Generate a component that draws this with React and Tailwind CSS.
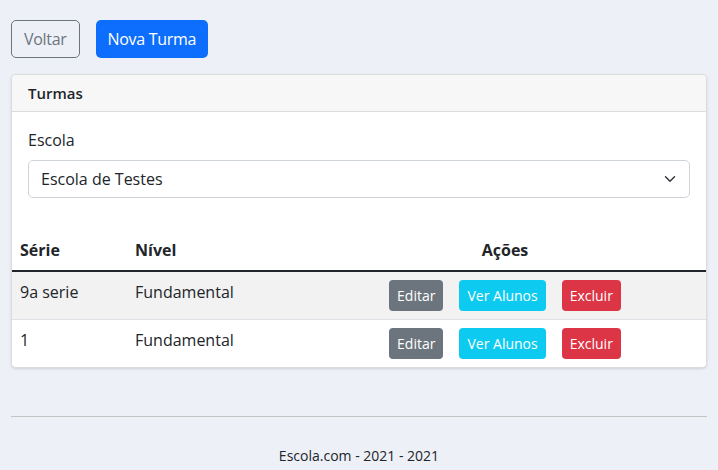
import React from 'react';

const turmas = [
  { id: 1, serie: '9a serie', nivel: 'Fundamental' },
  { id: 2, serie: '1', nivel: 'Fundamental' },
];

export default function App() {
  return (
    <div className="min-h-[470px] bg-[#edf0f7] px-[11px] pt-[20px] text-[#212529] [font-family:'Open_Sans','Noto_Sans',sans-serif]">
      {/* barra de acoes */}
      <div className="flex gap-4">
        <button className="h-[38px] px-3 border border-[#6c757d] text-[#6c757d] rounded-[5px] text-base tracking-[-0.3px]">Voltar</button>
        <button className="h-[38px] px-3 bg-[#0d6efd] text-white rounded-[5px] text-base tracking-[-0.3px]">Nova Turma</button>
      </div>

      {/* card de turmas */}
      <div className="mt-4 bg-white border border-[#dcdcdc] rounded-[5px] shadow-sm overflow-hidden">
        <div className="h-[37px] px-4 flex items-center bg-[#f7f7f7] border-b border-[#dcdcdc] text-[15px] font-semibold">Turmas</div>
        <div className="px-4 pt-4 pb-8">
          <label className="block mb-2 text-base leading-6">Escola</label>
          <div className="relative">
            <select className="w-full h-[38px] pl-3 pr-10 appearance-none border border-[#ced4da] rounded-[5px] bg-white text-base">
              <option>Escola de Testes</option>
            </select>
            <svg className="absolute right-[14px] top-[13px] pointer-events-none" width="12" height="12" viewBox="0 0 16 16" fill="none">
              <path d="M2 5l6 6 6-6" stroke="#343a40" strokeWidth="2" strokeLinecap="round" strokeLinejoin="round" />
            </svg>
          </div>
        </div>

        <table className="w-full text-left border-collapse">
          <thead>
            <tr className="border-b-2 border-[#212529] text-base font-bold">
              <th className="w-[115px] px-2 py-2 leading-6">Série</th>
              <th className="w-[177px] px-2 py-2 leading-6">Nível</th>
              <th className="px-2 py-2 leading-6 text-center">Ações</th>
            </tr>
          </thead>
          <tbody className="text-base">
            {turmas.map((t, i) => (
              <tr key={t.id} className={`${i % 2 === 0 ? 'bg-[#f2f2f2]' : 'bg-white'} ${i < turmas.length - 1 ? 'border-b border-[#dee2e6]' : ''}`}>
                <td className="px-2 py-2 align-top leading-6">{t.serie}</td>
                <td className="px-2 py-2 align-top leading-6">{t.nivel}</td>
                <td className="px-2 py-2 text-center">
                  <button className="mx-2 h-[31px] px-2 rounded-[4px] bg-[#6c757d] text-white text-sm">Editar</button>
                  <button className="mx-2 h-[31px] px-2 rounded-[4px] bg-[#0dcaf0] text-white text-sm">Ver Alunos</button>
                  <button className="mx-2 h-[31px] px-2 rounded-[4px] bg-[#dc3545] text-white text-sm">Excluir</button>
                </td>
              </tr>
            ))}
          </tbody>
        </table>
      </div>

      {/* rodape */}
      <footer className="mt-[48px]">
        <hr className="border-t border-[#c4c4c4]" />
        <p className="pt-[29px] text-center text-sm">Escola.com - 2021 - 2021</p>
      </footer>
    </div>
  );
}
